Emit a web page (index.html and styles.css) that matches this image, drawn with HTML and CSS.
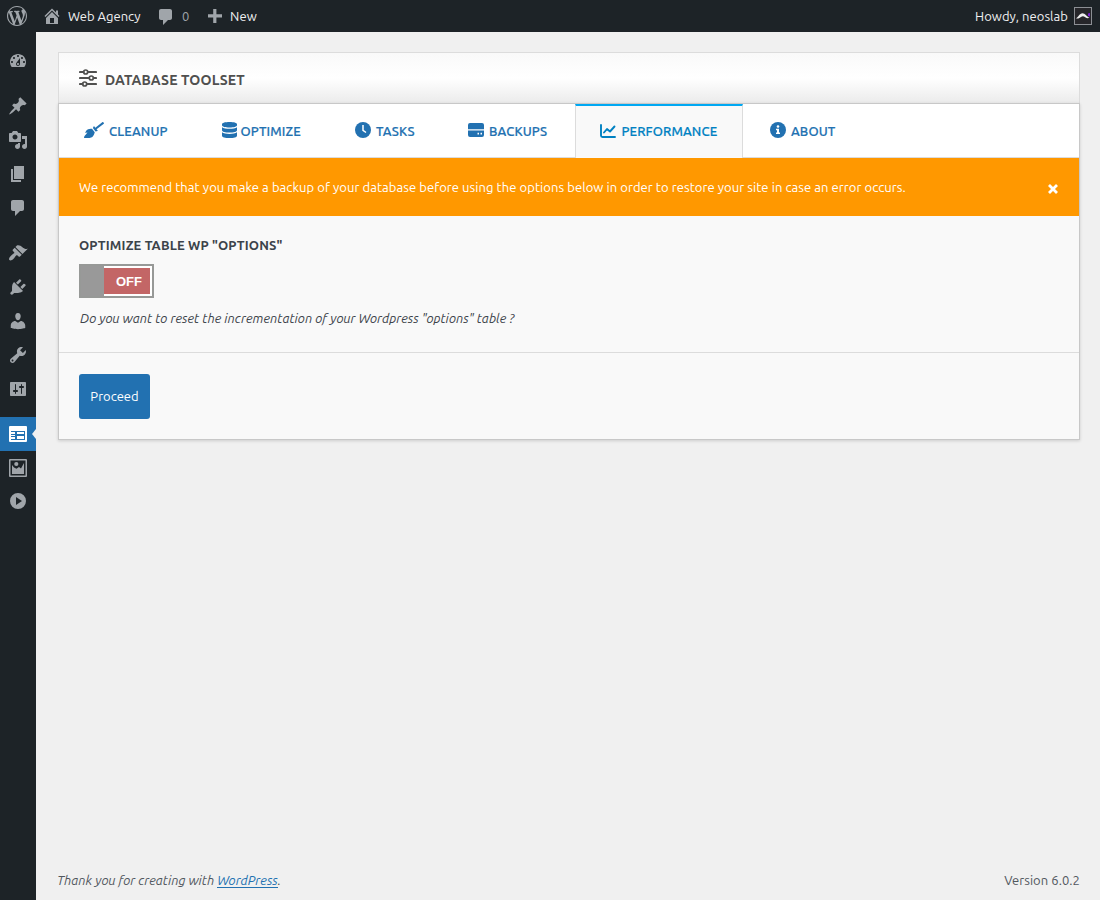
FILE: index.html
```html
<!DOCTYPE html>
<html lang="en">
<head>
<meta charset="utf-8">
<title>Database Toolset</title>
<link rel="stylesheet" href="styles.css">
</head>
<body>
<header class="adminbar">
  <svg class="wp-logo" viewBox="0 0 20 20"><path d="M20 10c0-5.51-4.49-10-10-10C4.48 0 0 4.49 0 10c0 5.52 4.48 10 10 10 5.51 0 10-4.48 10-10zM7.78 15.37L4.37 6.22c.55-.02 1.17-.08 1.17-.08.5-.06.44-1.13-.06-1.11 0 0-1.45.11-2.37.11-.18 0-.37 0-.58-.01C4.12 2.69 6.87 1.11 10 1.11c2.33 0 4.45.87 6.05 2.34-.68-.11-1.65.39-1.65 1.58 0 .74.45 1.36.9 2.1.35.61.55 1.36.55 2.46 0 1.49-1.4 5-1.4 5l-3.03-8.37c.54-.02.82-.17.82-.17.5-.05.44-1.25-.06-1.22 0 0-1.44.12-2.38.12-.87 0-2.33-.12-2.33-.12-.5-.03-.56 1.2-.06 1.22l.92.08 1.26 3.41zM17.41 10c.24-.64.74-1.87.43-4.25.7 1.29 1.05 2.71 1.05 4.25 0 3.29-1.73 6.24-4.4 7.78.97-2.59 1.94-5.2 2.92-7.78zM6.1 18.09C3.12 16.65 1.11 13.53 1.11 10c0-1.3.23-2.48.72-3.59C3.25 10.3 4.67 14.2 6.1 18.09zm4.03-6.63l2.58 6.98c-.86.29-1.76.45-2.71.45-.79 0-1.57-.11-2.29-.33.81-2.38 1.62-4.74 2.42-7.1z"/></svg>
  <svg class="home-icon" viewBox="0 0 20 20"><path d="M16 8.5l1.53 1.53-1.06 1.06L10 4.6l-6.47 6.49-1.06-1.06L10 2.5l4 4v-2h2v4zm-6-2.46l6 5.99V18H4v-5.97zM12 17v-5H8v5h4z"/></svg>
  <span class="site-name">Web Agency</span>
  <svg class="comment-icon" viewBox="0 0 20 20"><path d="M5 2h9c1.1 0 2 .9 2 2v7c0 1.1-.9 2-2 2h-2l-5 5v-5H5c-1.1 0-2-.9-2-2V4c0-1.1.9-2 2-2z"/></svg>
  <span class="count">0</span>
  <svg class="plus-icon" viewBox="0 0 14 14"><path d="M5.2 0h3.2v5.2H14v3.2H8.400V14H5.200V8.400H0V5.200h5.200z"/></svg>
  <span class="new">New</span>
  <span class="howdy">Howdy, neoslab</span>
  <svg class="avatar" viewBox="0 0 18 18"><path fill="#8c8f94" d="M0 0h18v18H0z"/><path fill="#26262a" d="M1 1h16v16H1z"/><path fill="#eee" d="M2 11.300C4.500 10 5.500 6.300 8.500 6.200c2.500 0 4 3.300 7 4.600-1.500.8-3 .4-4.300-.6-1.500-1-2.700-1.200-4.200-.2-1.500 1.200-3 1.900-5 1.300z"/><path fill="#7a1fd0" d="M14 6.500l2-.5v3.500l-2-.5z"/></svg>
</header>
<div class="shell">
  <nav class="menu">
    <a class="item"><svg viewBox="0 0 20 20"><path d="M3.760 16h12.480c1.100-1.370 1.760-3.110 1.760-5 0-4.420-3.580-8-8-8s-8 3.580-8 8c0 1.890.66 3.630 1.760 5zM10 4c.55 0 1 .45 1 1s-.45 1-1 1-1-.45-1-1 .45-1 1-1zM6 6c.55 0 1 .45 1 1s-.45 1-1 1-1-.45-1-1 .45-1 1-1zm8 0c.55 0 1 .45 1 1s-.45 1-1 1-1-.45-1-1 .45-1 1-1zm-5.370 5.550L12 7v6c0 1.100-.9 2-2 2s-2-.9-2-2c0-.57.24-1.080.63-1.450zM4 10c.55 0 1 .45 1 1s-.45 1-1 1-1-.45-1-1 .45-1 1-1zm12 0c.55 0 1 .45 1 1s-.45 1-1 1-1-.45-1-1 .45-1 1-1zm-5 3c0-.55-.45-1-1-1s-1 .45-1 1 .45 1 1 1 1-.45 1-1z"/></svg></a>
    <a class="item gap"><svg viewBox="0 0 20 20"><path d="M10.440 3.020l1.820-1.820 6.360 6.350-1.830 1.820c-1.050-.68-2.480-.57-3.410.36l-.75.75c-.92.93-1.040 2.350-.35 3.410l-1.830 1.820-2.410-2.410-2.800 2.790c-.42.42-3.380 2.710-3.800 2.290s1.860-3.390 2.280-3.810l2.790-2.790L4.100 9.360l1.830-1.820c1.050.69 2.480.57 3.400-.36l.75-.75c.93-.92 1.050-2.350.36-3.410z"/></svg></a>
    <a class="item"><svg viewBox="0 0 20 20"><path d="M13 11V4c0-.55-.45-1-1-1h-1.670L9 1H5L3.670 3H2c-.55 0-1 .45-1 1v7c0 .55.45 1 1 1h10c.55 0 1-.45 1-1zM7 4.500c1.380 0 2.500 1.120 2.500 2.500S8.380 9.500 7 9.500 4.500 8.380 4.500 7 5.620 4.500 7 4.500zM14 6h5v10.500c0 1.380-1.120 2.500-2.500 2.500S14 17.880 14 16.500s1.120-2.500 2.500-2.500c.17 0 .34.02.5.05V9h-3V6zm-4 8.050V13h2v3.500c0 1.380-1.120 2.500-2.500 2.500S7 17.880 7 16.500 8.120 14 9.500 14c.17 0 .34.02.5.05z"/></svg></a>
    <a class="item"><svg viewBox="0 0 20 20"><path d="M6 15V2h10v13H6zm-1 1h8v2H3V5h2v11z"/></svg></a>
    <a class="item"><svg viewBox="0 0 20 20"><path d="M5 2h9c1.100 0 2 .9 2 2v7c0 1.100-.9 2-2 2h-2l-5 5v-5H5c-1.100 0-2-.9-2-2V4c0-1.100.9-2 2-2z"/></svg></a>
    <a class="item gap"><svg viewBox="0 0 20 20"><path d="M14.480 11.060L7.410 3.990l1.500-1.500c.5-.56 2.300-.47 3.510.32 1.210.8 1.430 1.280 2.910 2.100 1.180.64 2.450 1.260 4.450.85zm-.71.71L6.700 4.700 4.930 6.470c-.39.39-.39 1.020 0 1.410l1.060 1.060c.39.39.39 1.030 0 1.420-.6.6-1.430 1.110-2.210 1.690-.35.26-.7.53-1.010.84C1.430 14.230.4 16.080 1.400 17.070c.99 1 2.840-.03 4.180-1.360.31-.31.58-.66.85-1.020.57-.78 1.080-1.610 1.690-2.210.39-.39 1.020-.39 1.410 0l1.060 1.060c.39.39 1.020.39 1.410 0z"/></svg></a>
    <a class="item"><svg viewBox="0 0 20 20"><path d="M13.110 4.360L9.870 7.600 8 5.730l3.240-3.240c.35-.34 1.050-.2 1.560.32.52.51.66 1.210.31 1.550zm-8 1.770l.91-1.120 9.010 9.010-1.190.84c-.71.71-2.630 1.160-3.820 1.160H6.140L4.900 17.260c-.59.59-1.540.59-2.120 0-.59-.58-.59-1.530 0-2.120l1.240-1.240v-3.880c0-1.130.4-3.190 1.090-3.890zm7.260 3.970l3.240-3.240c.34-.35 1.040-.21 1.550.31.52.51.66 1.210.31 1.550l-3.240 3.250z"/></svg></a>
    <a class="item"><svg viewBox="0 0 20 20"><path d="M10 9.250c-2.270 0-2.730-3.440-2.730-3.440C7 4.020 7.820 2 9.970 2c2.160 0 2.980 2.020 2.710 3.810 0 0-.41 3.440-2.680 3.440zm0 2.570L12.720 10c2.390 0 4.520 2.330 4.520 4.530v2.490s-3.650 1.130-7.240 1.130c-3.650 0-7.240-1.130-7.240-1.130v-2.490c0-2.250 1.940-4.480 4.470-4.480z"/></svg></a>
    <a class="item"><svg viewBox="0 0 20 20"><path d="M16.680 9.770c-1.340 1.340-3.300 1.670-4.950.99l-5.410 6.520c-.99.99-2.590.99-3.580 0s-.99-2.590 0-3.570l6.520-5.420c-.68-1.650-.35-3.610.99-4.950 1.280-1.280 3.120-1.620 4.720-1.060l-2.890 2.890 2.820 2.820 2.860-2.870c.53 1.580.18 3.390-1.080 4.650zM3.810 16.210c.4.39 1.040.39 1.430 0 .4-.4.4-1.040 0-1.430-.39-.4-1.030-.4-1.430 0-.39.39-.39 1.030 0 1.430z"/></svg></a>
    <a class="item"><svg viewBox="0 0 20 20"><path d="M18 16V4c0-.55-.45-1-1-1H3c-.55 0-1 .45-1 1v12c0 .55.45 1 1 1h14c.55 0 1-.45 1-1zM8 11h1c.55 0 1 .45 1 1s-.45 1-1 1H8v1.500c0 .28-.22.5-.5.5s-.5-.22-.5-.5V13H6c-.55 0-1-.45-1-1s.45-1 1-1h1V5.500c0-.28.22-.5.5-.5s.5.22.5.5V11zm5-2h-1c-.55 0-1-.45-1-1s.45-1 1-1h1V5.500c0-.28.22-.5.5-.5s.5.22.5.5V7h1c.55 0 1 .45 1 1s-.45 1-1 1h-1v5.500c0 .28-.22.5-.5.5s-.5-.22-.5-.5V9z"/></svg></a>
    <a class="item gap current"><svg class="big" viewBox="0 0 18 16"><path fill-rule="evenodd" d="M1 0h16a1 1 0 0 1 1 1v14a1 1 0 0 1-1 1H1a1 1 0 0 1-1-1V1a1 1 0 0 1 1-1zM2 5v1h4v2H2v1h4v1H2v1h4v2H2v1h14V5zM8 6h7v2H8zm0 4h7v3H8z"/></svg></a>
    <a class="item"><svg class="big" viewBox="0 0 18 18"><path fill-rule="evenodd" d="M1 0h16a1 1 0 0 1 1 1v16a1 1 0 0 1-1 1H1a1 1 0 0 1-1-1V1a1 1 0 0 1 1-1zm.5 1.500v15h15v-15z"/><path d="M3 15V6l2 2.500 2.500 1.200L10 8l2 1.500L15 4v11z"/><circle cx="7.300" cy="5" r="2.100"/></svg></a>
    <a class="item last"><svg viewBox="0 0 20 20"><path fill-rule="evenodd" d="M10 2a8 8 0 1 1 0 16 8 8 0 0 1 0-16zM8 6v8l6-4z"/></svg></a>
  </nav>
  <main class="content">
    <section class="panel-head">
      <svg viewBox="0 0 18 18" fill="none" stroke="#50504f" stroke-width="2.200" stroke-linecap="round"><path d="M1 3h3.500M9.500 3H17M1 9h8.500M15 9h2M1 15h2.500M8.500 15H17"/><circle cx="6.700" cy="3" r="2" stroke-width="1.700"/><circle cx="12.300" cy="9" r="2" stroke-width="1.700"/><circle cx="5.700" cy="15" r="2" stroke-width="1.700"/></svg>
      <h1>DATABASE TOOLSET</h1>
    </section>
    <section class="panel">
      <div class="tabs">
        <a class="tab t-cleanup"><svg width="20" height="16" viewBox="0 0 640 512"><path d="M256.470 216.770l86.730 109.180s-16.600 102.360-76.570 150.120C206.660 523.850 0 510.190 0 510.190s3.800-23.140 11-55.430l94.620-112.170c3.970-4.700-.87-11.620-6.650-9.500l-60.400 22.090c14.440-41.660 32.720-80.040 54.600-97.470 59.970-47.760 163.300-40.940 163.300-40.940zM636.530 31.030l-19.860-25c-5.490-6.900-15.520-8.050-22.410-2.560l-232.480 177.800-34.140-42.970c-5.090-6.410-15.140-5.210-18.590 2.210l-25.330 54.550 86.730 109.180 58.800-12.450c8-1.690 11.420-11.200 6.340-17.600l-34.090-42.920 232.480-177.800c6.890-5.480 8.040-15.530 2.550-22.440z"/></svg><span>CLEANUP</span></a>
        <a class="tab t-optimize"><svg width="15" height="16" viewBox="0 0 15 16"><path d="M0 2.300C0 .8 3.200 0 7.500 0S15 .8 15 2.300v1C15 4.700 11.800 5.500 7.500 5.500S0 4.700 0 3.300zM0 5.200c1.500 1.200 4.300 1.600 7.500 1.600s6-.4 7.500-1.600v3c0 1.600-3.200 2.400-7.500 2.400S0 9.800 0 8.200zM0 10.200c1.500 1.200 4.300 1.700 7.500 1.700s6-.5 7.500-1.700v3.500c0 1.500-3.200 2.300-7.500 2.300S0 15.200 0 13.700z"/></svg><span>OPTIMIZE</span></a>
        <a class="tab t-tasks"><svg width="16" height="16" viewBox="0 0 16 16"><circle cx="8" cy="8" r="8"/><path d="M8 3v5.300l3 2.200" fill="none" stroke="#fff" stroke-width="1.500"/></svg><span>TASKS</span></a>
        <a class="tab t-backups"><svg width="16" height="16" viewBox="0 0 16 16"><path fill-rule="evenodd" d="M2 1h12a2 2 0 0 1 2 2v4.200H0V3a2 2 0 0 1 2-2zM0 8.500h16V13a2 2 0 0 1-2 2H2a2 2 0 0 1-2-2zm9.500 2.300v1.700H11v-1.700zm3 0v1.700H14v-1.700z"/></svg><span>BACKUPS</span></a>
        <a class="tab t-performance active"><svg width="16" height="16" viewBox="0 0 16 16" fill="none" stroke="currentColor" stroke-width="1.900" stroke-linecap="round" stroke-linejoin="round"><path d="M1 2v10.500c0 1 .5 1.500 1.500 1.500H15M4 9.500l3-3.500 3 2.500 4.500-5"/></svg><span>PERFORMANCE</span></a>
        <a class="tab t-about"><svg width="16" height="16" viewBox="0 0 16 16"><circle cx="8" cy="8" r="8"/><circle cx="8" cy="4.500" r="1.300" fill="#fff"/><path fill="#fff" d="M6 6.800h3v3.800h1V12H6v-1.400h1V8.200H6z"/></svg><span>ABOUT</span></a>
      </div>
      <div class="alert"><p>We recommend that you make a backup of your database before using the options below in order to restore your site in case an error occurs.</p>
        <svg viewBox="0 0 10 10" width="10" height="10"><path d="M1 1l8 8M9 1L1 9" stroke="#fff" stroke-width="2.800"/></svg></div>
      <div class="option">
        <h2>OPTIMIZE TABLE WP "OPTIONS"</h2>
        <div class="toggle"><span class="knob"></span><span class="off">OFF</span></div>
        <p class="hint">Do you want to reset the incrementation of your Wordpress "options" table ?</p>
      </div>
      <div class="actions"><button class="proceed">Proceed</button></div>
    </section>
    <footer class="footer"><p class="thanks">Thank you for creating with <a>WordPress</a>.</p><p class="version">Version 6.0.2</p></footer>
  </main>
</div>
</body>
</html>
```
FILE: styles.css
```css
* { box-sizing: border-box; margin: 0; padding: 0; }
body { background: #f0f0f0; color: #3c434a; font: 13px/20px Ubuntu, "Noto Sans", sans-serif; height: 900px; overflow: hidden; }
svg { display: block; flex: none; }
span, p, h1, h2 { white-space: nowrap; }

.adminbar { display: flex; align-items: center; height: 32px; padding: 0 8px 0 7px; background: #1d2327; color: #f0f0f1; fill: #a0a5aa; }
.wp-logo { width: 20px; height: 20px; }
.home-icon { width: 20px; height: 20px; margin-left: 15px; }
.site-name { width: 73px; margin-left: 6px; }
.comment-icon { width: 20px; height: 20px; margin: 1px 0 0 15px; }
.count { width: 8px; margin-left: 6px; color: #a0a5aa; }
.plus-icon { width: 14px; height: 14px; margin-left: 18px; }
.new { margin-left: 8px; letter-spacing: .15px; }
.howdy { margin-left: auto; margin-right: 6px; letter-spacing: .06px; }
.avatar { width: 18px; height: 18px; }

.shell { display: flex; height: 868px; }
.menu { width: 36px; padding-top: 12px; background: #1d2327; fill: #a0a5aa; }
.item { position: relative; display: flex; align-items: center; justify-content: center; height: 34px; padding-right: 1px; }
.item svg { width: 20px; height: 20px; }
.item .big { width: 18px; height: 18px; }
.gap { margin-top: 11px; }
.last { height: 32px; }
.current { background: #2271b1; fill: #fff; }
.current::after { content: ""; position: absolute; right: 0; top: 12px; border: 5px solid transparent; border-left: 0; border-right: 4px solid #f0f0f0; }

.content { display: flex; flex-direction: column; flex: 1; padding: 20px 20px 0 22px; }
.panel-head { display: flex; align-items: center; height: 51px; padding-left: 20px; border: 1px solid #dcdcdc; border-bottom: 0; background: linear-gradient(#f9f9f9, #fff 50%, #ebebeb); }
.panel-head svg { width: 18px; height: 18px; }
h1 { margin: 3px 0 0 8px; font-size: 14px; line-height: 20px; font-weight: 700; letter-spacing: .15px; color: #50504f; }
.panel { border: 1px solid #c8c8c8; background: #f9f9f9; box-shadow: 0 1px 3px rgba(0, 0, 0, .15); }
.tabs { display: flex; height: 54px; border-bottom: 1px solid #dcdcdc; background: #fff; color: #2271b1; fill: currentColor; font-weight: 500; letter-spacing: .12px; }
.tab { display: flex; align-items: center; gap: 4px; padding: 0 0 1px 25px; }
.tab span { margin-top: 1px; -webkit-text-stroke: .2px currentColor; }
.t-cleanup { width: 137px; gap: 5px; }
.t-optimize { width: 134px; padding-left: 25.500px; }
.t-tasks { width: 113px; gap: 5px; }
.t-backups { width: 132px; gap: 5px; }
.t-performance { width: 168px; gap: 5.500px; padding: 0 0 3px 24px; }
.t-about { padding-left: 27px; gap: 5px; }
.active { height: 54px; border: 1px solid #dcdcdc; border-width: 0 1px; border-top: 2px solid #00a8f3; background: #f9f9f9; color: #0081c2; }
.alert { display: flex; align-items: center; justify-content: space-between; height: 58px; padding: 0 21px 0 20px; background: #ff9800; color: #fff; letter-spacing: .068px; }
.alert svg { margin-top: 4px; }
.option { height: 137px; padding: 19px 20px 0; border-bottom: 1px solid #dcdcdc; }
h2 { font-size: 13px; line-height: 20px; font-weight: 700; letter-spacing: .14px; }
.toggle { display: flex; width: 75px; height: 34px; margin: 9px 0 10px; border: 2px solid #979997; background: #fff; }
.knob { width: 23px; background: #999; }
.off { width: 46px; margin: 2px 0; padding: 1px 0 0 12px; background: #c36666; color: #fff; font: bold 13px/25px "Liberation Sans", sans-serif; }
.hint { padding-left: 1px; font-style: italic; letter-spacing: .03px; }
.actions { height: 86px; padding: 21px 20px; }
.proceed { width: 71px; height: 45px; padding-bottom: 2px; border: 0; border-radius: 3px; background: #2271b1; color: #fff; font: 13px/20px Ubuntu, "Noto Sans", sans-serif; }
.footer { display: flex; justify-content: space-between; margin: auto 0 10px -1px; color: #50575e; }
.version { letter-spacing: .06px; }
.thanks { font-style: italic; }
.thanks a { color: #2271b1; text-decoration: none; box-shadow: inset 0 -1px #2271b1; padding-bottom: 1px; }
```
